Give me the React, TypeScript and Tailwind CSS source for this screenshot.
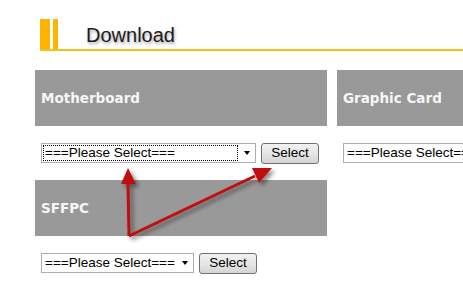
import React from "react";

const font = "font-['Liberation_Sans',Arial,sans-serif]";

function FakeSelect({ width, focused }: { width: string; focused?: boolean }) {
  return (
    <div className={`flex h-[20px] shrink-0 ${width} border border-[#abadb3] bg-white`}>
      <div className="flex min-w-0 flex-1 items-center p-[1px]">
        <div
          className={`flex h-full w-full items-center overflow-hidden whitespace-nowrap pl-[1px] text-[13.5px] leading-none text-black ${
            focused ? "border border-dotted border-black" : "border border-transparent"
          }`}
        >
          ===Please Select===
        </div>
      </div>
      <div className="flex w-[16px] shrink-0 items-center justify-center">
        <div className="h-0 w-0 border-x-[3.5px] border-t-[4px] border-x-transparent border-t-black" />
      </div>
    </div>
  );
}

function SelectButton() {
  return (
    <button className="flex h-[21px] w-[58px] shrink-0 items-center justify-center rounded-[3px] border border-[#707070] bg-gradient-to-b from-[#f2f2f2] via-[#e6e6e6] to-[#d4d4d4] text-[13.5px] leading-none text-black">
      Select
    </button>
  );
}

function Category({ title, selectWidth, focused }: { title: string; selectWidth: string; focused?: boolean }) {
  return (
    <div className="flex flex-col">
      <div className="flex h-[56px] items-center whitespace-nowrap bg-[#999999] pl-[6px] font-['DejaVu_Sans',Verdana,sans-serif] text-[13.5px] font-bold text-[#f6f6f6]">
        {title}
      </div>
      <div className="mb-[16px] mt-[16px] flex h-[22px] items-center gap-[5px] pl-[6px]">
        <FakeSelect width={selectWidth} focused={focused} />
        <SelectButton />
      </div>
    </div>
  );
}

export default function App() {
  return (
    <div className={`relative h-[298px] w-[463px] overflow-hidden bg-white ${font}`}>
      {/* title bar */}
      <div className="ml-[40px] mt-[19px] flex flex-col">
        <div className="flex h-[30px]">
          <div className="w-[10px] bg-[#ffb400]" />
          <div className="ml-[3px] w-[5px] bg-[#ffb400]" />
          <div className="pl-[28px] pt-[4px] text-[20px] leading-[24px] text-[#1c1c1c] [text-shadow:1px_2px_3px_rgba(0,0,0,0.35)]">
            Download
          </div>
        </div>
        <div className="h-[2px] bg-[#f3c31c]" />
      </div>

      <div className="ml-[35px] mt-[19px] grid w-max grid-cols-[292px_292px] gap-x-[10px]">
        <Category title="Motherboard" selectWidth="w-[215px]" focused />
        <Category title="Graphic Card" selectWidth="w-[215px]" />
        <Category title="SFFPC" selectWidth="w-[153px]" />
      </div>

      {/* annotation arrows */}
      <svg className="pointer-events-none absolute inset-0" width="463" height="298" viewBox="0 0 463 298">
        <defs>
          <filter id="sh" x="-20%" y="-20%" width="140%" height="140%">
            <feDropShadow dx="3" dy="3" stdDeviation="2" floodColor="#000" floodOpacity="0.45" />
          </filter>
        </defs>
        <g filter="url(#sh)" fill="#c00d0d" stroke="#c00d0d">
          <path d="M129 236 L128 182" strokeWidth="3" fill="none" />
          <path d="M129 236 L255 176" strokeWidth="3" fill="none" />
          <polygon points="128,168 121,184 136,184" stroke="none" />
          <polygon points="272,168 259,183 252,168" stroke="none" />
        </g>
      </svg>
    </div>
  );
}
